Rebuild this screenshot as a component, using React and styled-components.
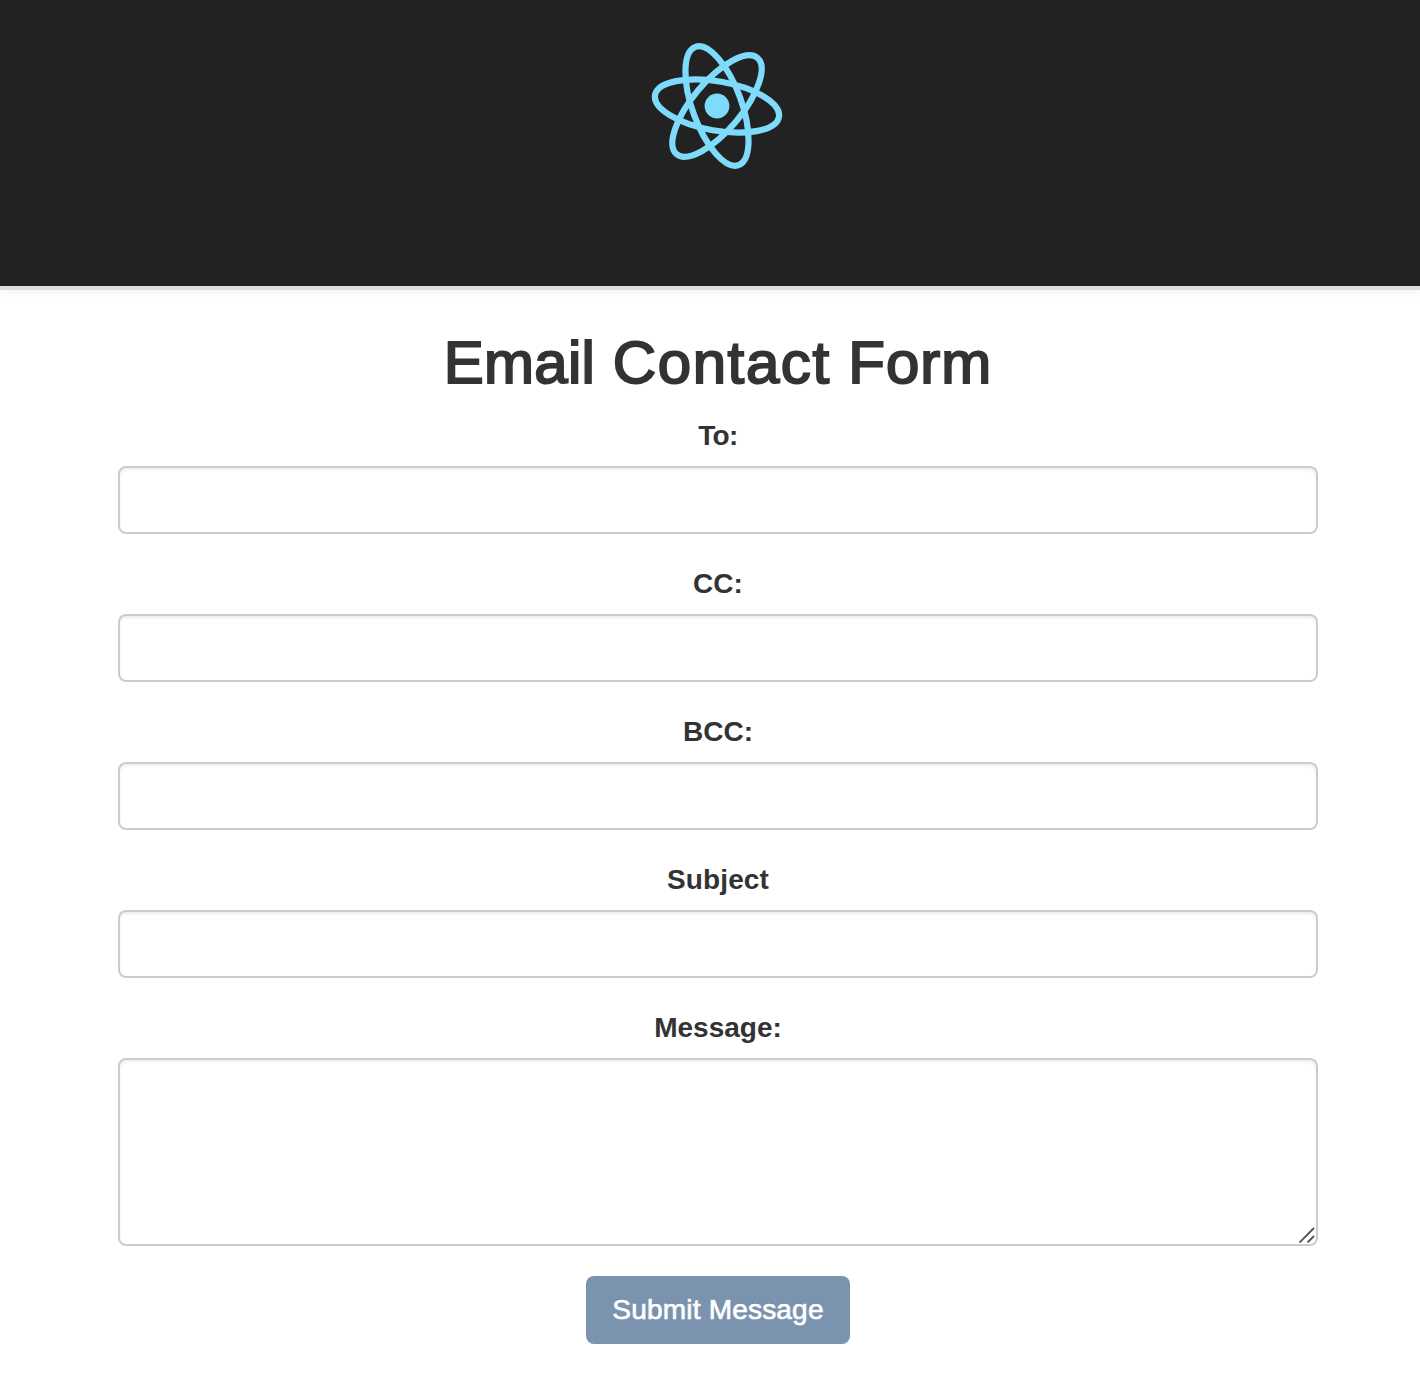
import React from "react";
import styled, { createGlobalStyle } from "styled-components";

const GlobalStyle = createGlobalStyle`
  *, *::before, *::after { box-sizing: border-box; }
  body {
    margin: 0;
    background: #fff;
    color: #333;
    font-family: "Liberation Sans", Arial, sans-serif;
    font-size: 28px;
    line-height: 40px;
  }
`;

const Header = styled.header`
  display: flex;
  justify-content: center;
  height: 290px;
  padding: 36px 0 0 14px;
  background: #222;
  border-bottom: 4px solid #dcdcdc;
  box-shadow: 0 1px 8px rgba(0, 0, 0, 0.06);
`;

const Logo = styled.svg`
  display: block;
  width: 140px;
  height: 140px;
`;

const Form = styled.form`
  display: flex;
  flex-direction: column;
  padding: 40px 102px 50px 118px;
`;

const Title = styled.h1`
  margin: 0 0 20px;
  font-size: 60px;
  font-weight: 400;
  line-height: 66px;
  letter-spacing: 0.95px;
  text-align: center;
  -webkit-text-stroke: 2px #333;
`;

const Word = styled.span`
  letter-spacing: ${(p) => p.$tracking}px;
`;

const Field = styled.div`
  position: relative;
  display: flex;
  flex-direction: column;
  margin-bottom: 30px;
`;

const Label = styled.label`
  margin-bottom: 10px;
  font-weight: 700;
  letter-spacing: ${(p) => p.$tracking || 0}px;
  text-align: center;
`;

const Input = styled.input`
  display: block;
  width: 100%;
  height: 68px;
  padding: 12px 24px;
  border: 2px solid #ccc;
  border-radius: 8px;
  outline: none;
  background: #fff;
  box-shadow: inset 0 2px 3px rgba(0, 0, 0, 0.075);
  color: #555;
  font: inherit;
`;

const TextArea = styled(Input)`
  height: 188px;
  resize: none;
`;

const Grip = styled.svg`
  position: absolute;
  right: 3px;
  bottom: 3px;
  width: 16px;
  height: 16px;
  pointer-events: none;
`;

const Submit = styled.button`
  align-self: center;
  width: 264px;
  height: 68px;
  padding: 0;
  border: 0;
  border-radius: 8px;
  background: #7a94b0;
  color: #fff;
  font: inherit;
  letter-spacing: 0.2px;
  -webkit-text-stroke: 0.7px #fff;
  text-shadow: 0 -1px 1px rgba(0, 0, 0, 0.12);
  white-space: nowrap;
`;

const fields = [
  { id: "to", label: "To:", tracking: -0.6 },
  { id: "cc", label: "CC:" },
  { id: "bcc", label: "BCC:" },
  { id: "subject", label: "Subject", tracking: 0.1 },
];

const orbits = [10, 70, 130];

export default function App() {
  return (
    <>
      <GlobalStyle />
      <Header>
        <Logo viewBox="-70 -70 140 140" fill="none" stroke="#7fdbfb" strokeWidth="6.2">
          <circle r="12.4" fill="#7fdbfb" stroke="none" />
          {orbits.map((angle) => (
            <ellipse key={angle} rx="62.9" ry="24.6" transform={`rotate(${angle})`} />
          ))}
        </Logo>
      </Header>
      <Form onSubmit={(e) => e.preventDefault()}>
        <Title>
          <Word $tracking={0.25}>Email</Word> <Word $tracking={1.6}>Contact</Word> Form
        </Title>
        {fields.map(({ id, label, tracking }) => (
          <Field key={id}>
            <Label htmlFor={id} $tracking={tracking}>{label}</Label>
            <Input id={id} type="text" />
          </Field>
        ))}
        <Field>
          <Label htmlFor="message">Message:</Label>
          <TextArea as="textarea" id="message" />
          <Grip viewBox="0 0 16 16" stroke="#555" strokeWidth="1.9">
            <path d="M0.5 15.5 15 1M8.5 15.5 15 9" />
          </Grip>
        </Field>
        <Submit type="submit">Submit Message</Submit>
      </Form>
    </>
  );
}
